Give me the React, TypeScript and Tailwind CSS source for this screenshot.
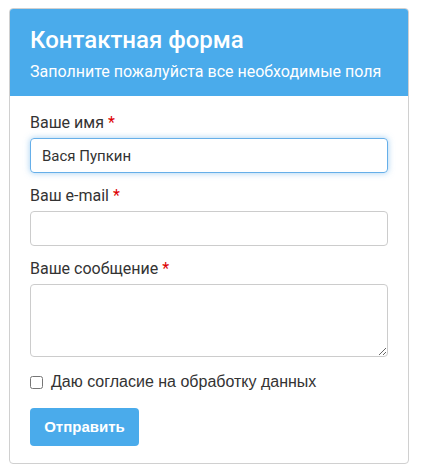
import { useEffect, useRef } from 'react';

export default function App() {
  const nameRef = useRef<HTMLInputElement>(null);

  useEffect(() => {
    const el = nameRef.current;
    if (!el) return;
    el.focus();
    el.setSelectionRange(el.value.length, el.value.length);
  }, []);

  return (
    <div className="min-h-screen bg-white pt-2 pl-[9px]" style={{ fontFamily: 'Roboto, "Liberation Sans", sans-serif' }}>
      <div className="w-[400px] rounded border border-[#d0d0d0] bg-white overflow-hidden">
        <div className="bg-[#4aabeb] px-5 pt-[15px] pb-[13px] text-white -mx-px -mt-px">
          <h1 className="text-[24px] leading-[34px] font-medium pl-px">Контактная форма</h1>
          <p className="text-[16px] leading-[22px] mt-[4px] pl-px">Заполните пожалуйста все необходимые поля</p>
        </div>

        <form className="px-5 pt-[17px] pb-[17px] text-[#333]" onSubmit={(e) => e.preventDefault()}>
          <label className="block text-[16px] leading-5 mb-[5px]">
            Ваше имя <span className="text-[#d00]">*</span>
          </label>
          <input
            ref={nameRef}
            defaultValue="Вася Пупкин"
            className="block w-full h-[35px] px-[11px] text-[15px] rounded border border-[#66afe9] shadow-[0_0_6px_rgba(102,175,233,0.6)] outline-none text-[#333] caret-[#333]"
          />

          <label className="block text-[16px] leading-5 mt-[13px] mb-[5px]">
            Ваш e-mail <span className="text-[#d00]">*</span>
          </label>
          <input className="block w-full h-[35px] px-[11px] text-[15px] rounded border border-[#ccc] outline-none" />

          <label className="block text-[16px] leading-5 mt-[13px] mb-[5px]">
            Ваше сообщение <span className="text-[#d00]">*</span>
          </label>
          <textarea className="block w-full h-[73px] px-[11px] py-2 text-[15px] rounded border border-[#ccc] outline-none" />

          <label className="flex items-center gap-2 mt-[15px] text-[16px] leading-5" style={{ fontFamily: '"Liberation Sans", Arial, sans-serif' }}>
            <input type="checkbox" className="w-[13px] h-[13px] m-0" />
            Даю согласие на обработку данных
          </label>

          <button
            type="submit"
            className="mt-4 h-[38px] w-[109px] rounded bg-[#4aabeb] text-white text-[15px] font-bold"
            style={{ fontFamily: '"Liberation Sans", Arial, sans-serif' }}
          >
            Отправить
          </button>
        </form>
      </div>
    </div>
  );
}
